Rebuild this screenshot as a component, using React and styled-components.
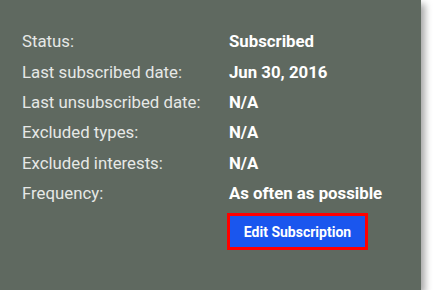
import React from 'react'
import styled, { createGlobalStyle } from 'styled-components'

const GlobalStyle = createGlobalStyle`
    body {
        margin: 0;
        background: #ffffff;
        font-family: Roboto, "Liberation Sans", sans-serif;
    }
`

const Panel = styled.section`
    width: 421px;
    height: 290px;
    box-sizing: border-box;
    padding: 26px 0 0 22px;
    background: #5f6960;
    box-shadow: 4px 4px 7px rgba(0, 0, 0, 0.35);
`

const Details = styled.dl`
    display: grid;
    grid-template-columns: 207px auto;
    grid-auto-rows: 30.4px;
    align-items: center;
    margin: 0;
    font-size: 16.8px;
`

const Label = styled.dt`
    color: #e6e8e6;
    margin: 0;
`

const Value = styled.dd`
    color: #ffffff;
    font-weight: 700;
    margin: 0;
`

const Actions = styled.div`
    padding: 5px 0 0 205px;
`

const EditButton = styled.button`
    width: 141px;
    height: 37px;
    border: 3px solid #ff0000;
    background: #1a56ee;
    color: #ffffff;
    font-family: Roboto, "Liberation Sans", sans-serif;
    font-size: 14px;
    font-weight: 700;
    cursor: pointer;
    padding: 0;
`

const rows = [
    ['Status:', 'Subscribed'],
    ['Last subscribed date:', 'Jun 30, 2016'],
    ['Last unsubscribed date:', 'N/A'],
    ['Excluded types:', 'N/A'],
    ['Excluded interests:', 'N/A'],
    ['Frequency:', 'As often as possible'],
]

export default function App() {
    return (
        <>
            <GlobalStyle />
            <Panel>
                <Details>
                    {rows.map(([label, value]) => (
                        <React.Fragment key={label}>
                            <Label>{label}</Label>
                            <Value>{value}</Value>
                        </React.Fragment>
                    ))}
                </Details>
                <Actions>
                    <EditButton type="button">Edit Subscription</EditButton>
                </Actions>
            </Panel>
        </>
    )
}
